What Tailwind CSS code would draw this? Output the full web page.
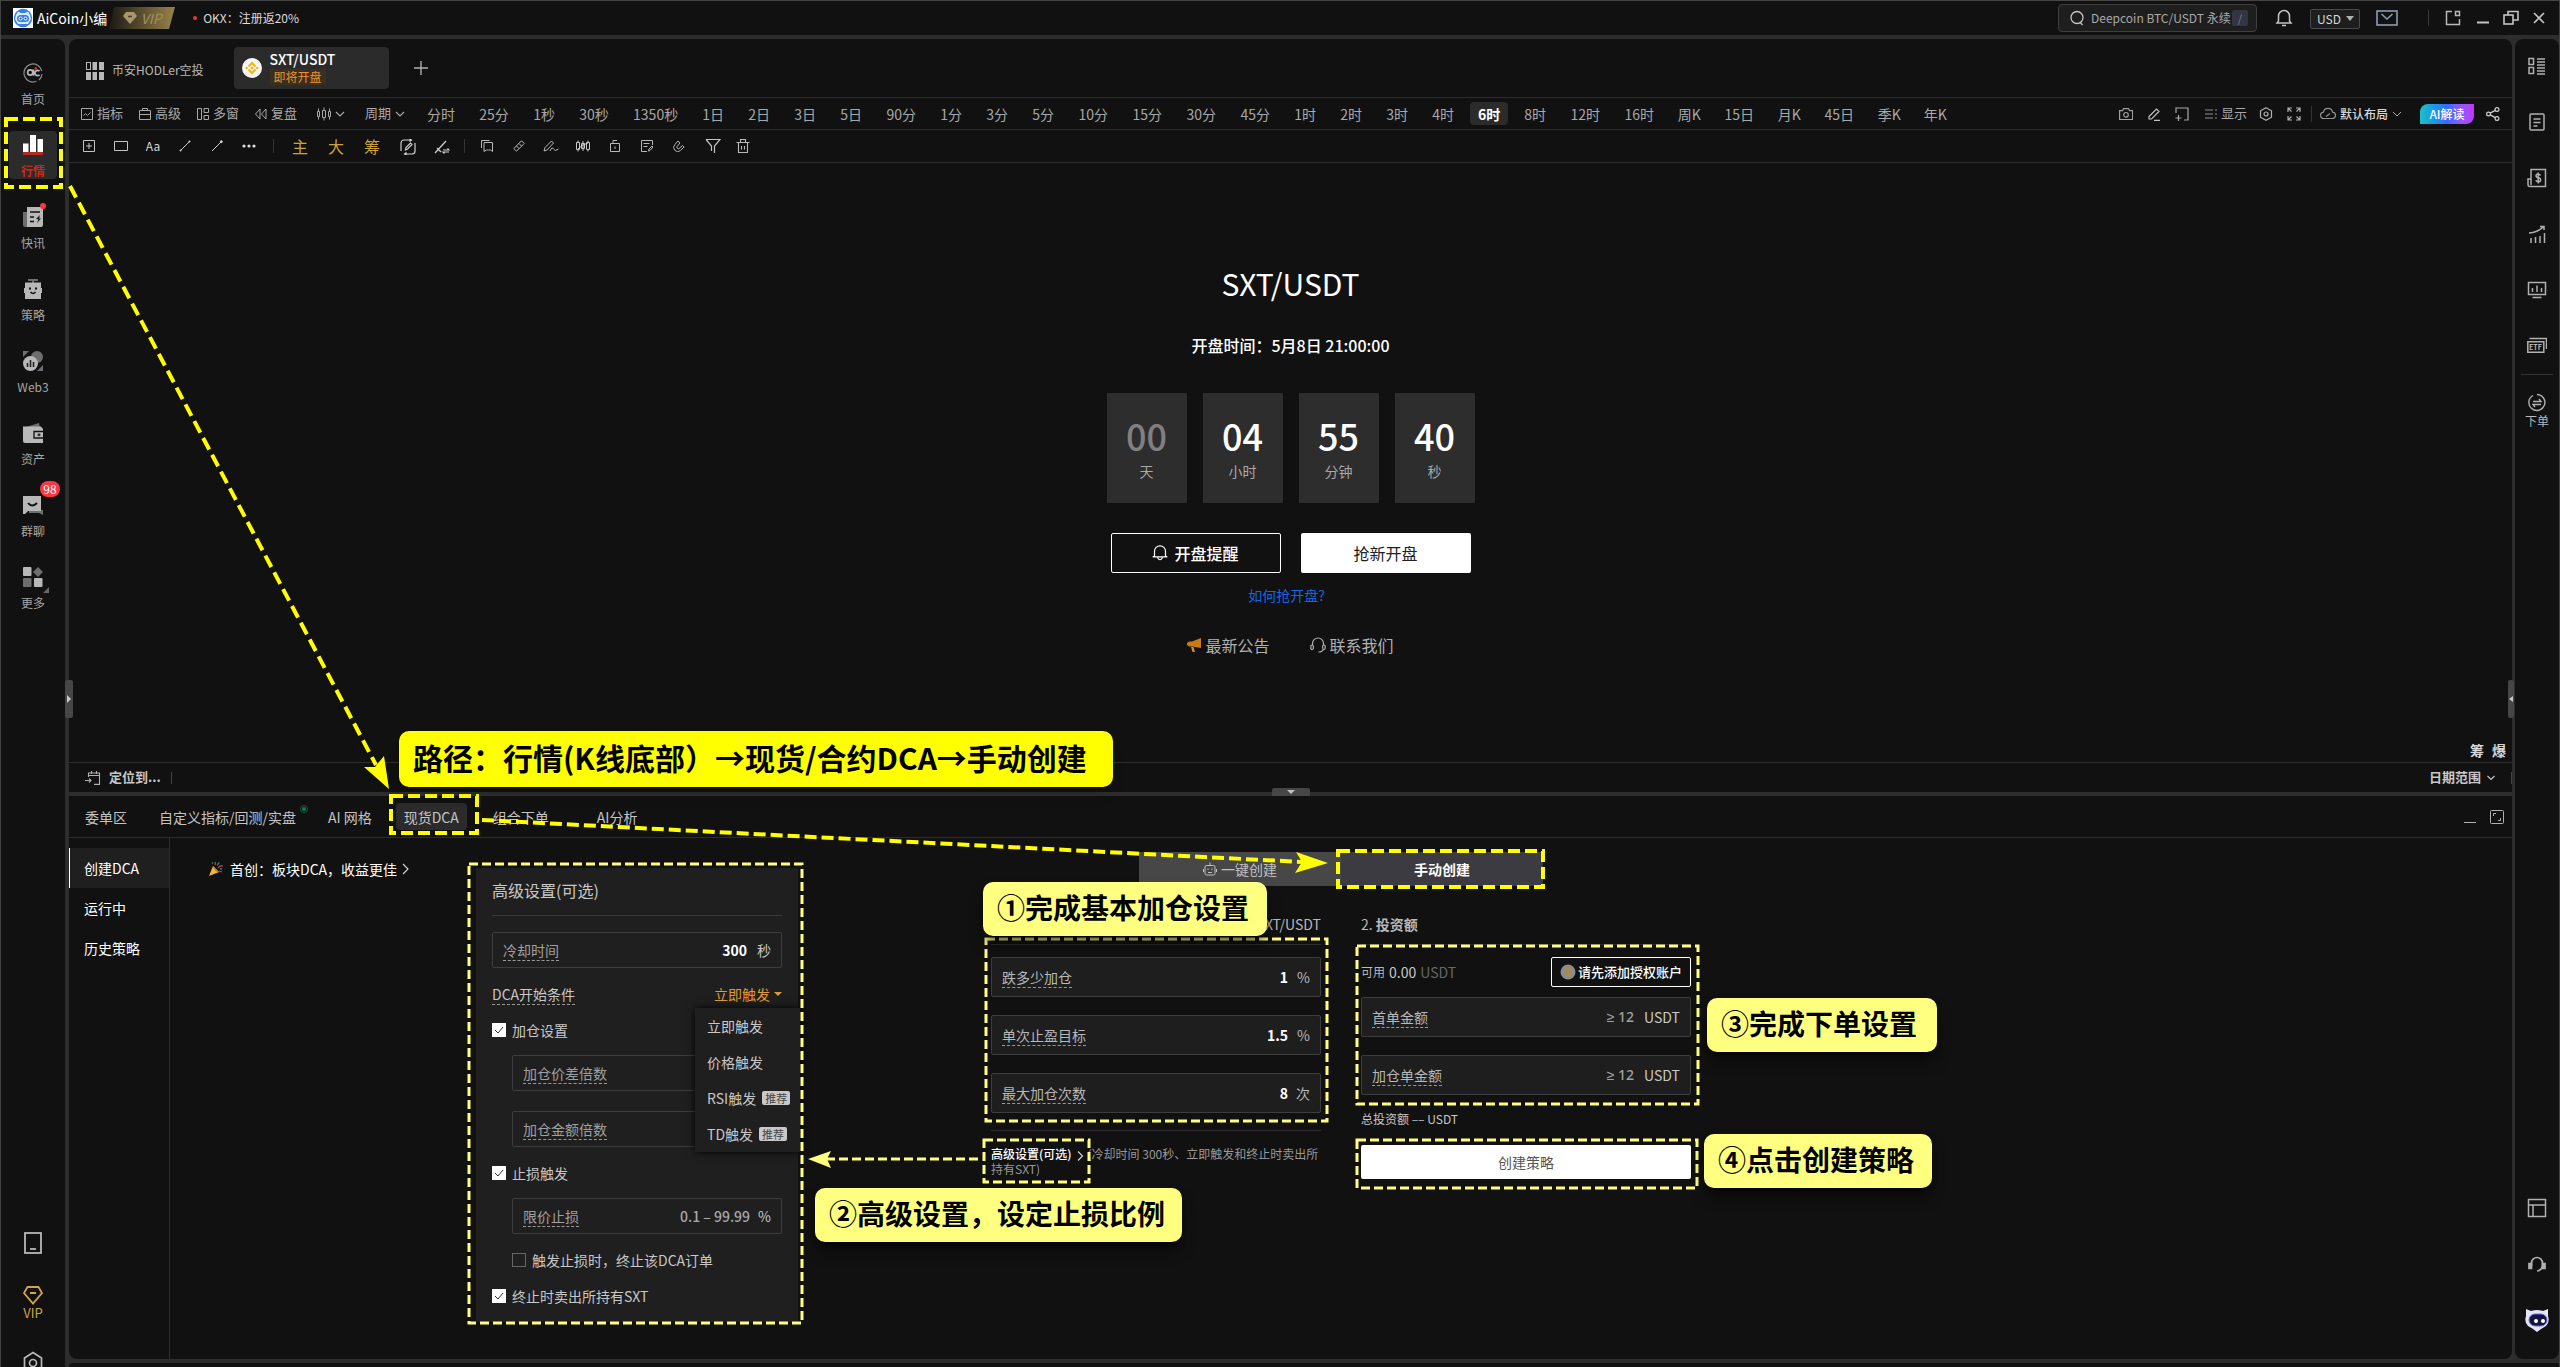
<!DOCTYPE html>
<html lang="zh-CN">
<head>
  <meta charset="UTF-8">
  <meta name="viewport" content="width=device-width, initial-scale=1.0">
  <title>AiCoin - SXT/USDT</title>
  <script src="https://cdn.jsdelivr.net/npm/@tailwindcss/browser@4"></script>
</head>
<body class="relative h-screen overflow-hidden flex flex-col bg-[#2d2d2d] border-t border-l border-r border-[#444] text-[#b8b8b8] text-sm font-['Noto_Sans_CJK_SC',sans-serif]">

  <!-- Title bar -->
  <header class="h-[34px] shrink-0 bg-[#111] flex items-center pl-3 pr-3.5">
    <svg class="w-5 h-5" viewBox="0 0 20 20"><rect width="20" height="20" fill="#fff"/><circle cx="10" cy="10" r="9.2" fill="#2f80f5"/><path d="M3 7l2-3.5L8 5h4l3-1.5L17 7l1 4-3 5H5l-3-5z" fill="#dcebff"/><rect x="4" y="7" width="12" height="7" rx="3.5" fill="#3d7fe0"/><circle cx="7.5" cy="10.5" r="2" fill="#dcebff"/><circle cx="12.5" cy="10.5" r="2" fill="#dcebff"/><circle cx="7.5" cy="10.5" r="1" fill="#1d4fb0"/><circle cx="12.5" cy="10.5" r="1" fill="#1d4fb0"/></svg>
    <span class="ml-1 text-white">AiCoin小编</span>
    <span class="relative ml-0.5 w-[66px] h-[22px] flex items-center justify-center gap-1">
      <svg class="absolute inset-0 w-full h-full" viewBox="0 0 66 22" preserveAspectRatio="none"><defs><linearGradient id="vip"><stop offset="0" stop-color="#1c1913"/><stop offset="1" stop-color="#97834a"/></linearGradient></defs><path d="M5 0H66L60 22H0z" fill="url(#vip)"/></svg>
      <svg class="relative w-3.5 h-3" viewBox="0 0 14 12"><path d="M3 0h8l3 4-7 8-7-8z" fill="#a8976a"/><path d="M5 4.5h4" stroke="#4a4026" stroke-width="1.6"/></svg>
      <span class="relative italic text-[#a08e5c] leading-5">VIP</span>
    </span>
    <span class="ml-[18px] w-1 h-1 rounded-full bg-[#f0353c]"></span>
    <a href="#" class="ml-1.5 text-xs text-[#dcdcdc]">OKX：注册返20%</a>

    <label class="ml-auto w-[199px] h-7 flex items-center bg-[#1e1e1e] border border-[#3f3f3f] rounded-sm pl-2.5 pr-2">
      <svg class="w-4 h-4 shrink-0" viewBox="0 0 16 16" fill="none" stroke="#c4c4c4" stroke-width="1.3"><circle cx="8" cy="7.5" r="6"/><path d="M11 12l2.5 3"/></svg>
      <input type="text" aria-label="搜索" value="Deepcoin BTC/USDT 永续" class="ml-1.5 w-0 grow min-w-0 text-xs text-[#a8a8a8] bg-transparent outline-none">
      <kbd class="w-4 h-4 rounded-xs bg-[#343542] text-[#7c7c7c] text-[11px] leading-4 text-center font-['Noto_Sans_CJK_SC',sans-serif]">/</kbd>
    </label>
    <button aria-label="通知" class="ml-[18px]"><svg class="w-[18px] h-[18px]" viewBox="0 0 18 18" fill="none" stroke="#c4c4c4" stroke-width="1.5"><path d="M9 1.5a5.5 5.5 0 0 1 5.5 5.5v5l1.5 2H2l1.5-2V7A5.5 5.5 0 0 1 9 1.5zM7 16.5h4"/></svg></button>
    <div class="relative ml-[17px] w-[50px] h-5">
      <select aria-label="货币" class="appearance-none w-full h-full pl-1.5 bg-[#1e1e1e] border border-[#4a4a4a] rounded-xs text-xs leading-4 text-[#d8d8d8]"><option>USD</option><option>CNY</option></select>
      <svg class="absolute right-1.5 top-2 w-2 h-1.5 pointer-events-none" viewBox="0 0 8 6"><path d="M0 0h8L4 5z" fill="#b0b0b0"/></svg>
    </div>
    <button aria-label="邮件" class="ml-4"><svg class="w-[22px] h-4" viewBox="0 0 22 16" fill="none" stroke="#8f9bb0" stroke-width="1.6"><rect x="1" y="1" width="20" height="14"/><path d="M5.5 4L11 9l5.500-5"/></svg></button>
    <span class="ml-[30px] w-px h-4 bg-[#3a3a3a]"></span>
    <button aria-label="侧窗" class="ml-4"><svg class="w-4 h-4" viewBox="0 0 16 16" fill="none" stroke="#b8b8b8" stroke-width="1.5"><path d="M7 1.5H1.5v13h13V9"/><rect x="10.5" y="1.5" width="4" height="4"/></svg></button>
    <button aria-label="最小化" class="ml-4"><svg class="w-3 h-4" viewBox="0 0 12 16"><path d="M0 12.5h12" stroke="#c4c4c4" stroke-width="2"/></svg></button>
    <button aria-label="还原" class="ml-3.5"><svg class="w-4 h-4" viewBox="0 0 16 16" fill="none" stroke="#c4c4c4" stroke-width="1.6"><rect x="1" y="5" width="9" height="9"/><path d="M5 5V1.500h10V10h-5"/></svg></button>
    <button aria-label="关闭" class="ml-3.5"><svg class="w-3 h-3" viewBox="0 0 12 12" stroke="#c4c4c4" stroke-width="1.6"><path d="M1 1l10 10M11 1L1 11"/></svg></button>
  </header>

  <div class="mt-1 flex-1 min-h-0 flex">

    <!-- Left navigation -->
    <nav class="w-16 shrink-0 bg-[#111] rounded-tr-lg flex flex-col items-center pt-5 text-xs leading-4 text-[#a6a6a6]">
      <div class="flex flex-col gap-6">
        <a href="#" class="w-12 h-12 pt-1 flex flex-col items-center gap-2">
          <svg class="w-5 h-5 shrink-0" viewBox="0 0 20 20" fill="none"><path d="M13.5 18.300A9 9 0 1 1 18.800 8M19 11a9 9 0 0 1-3 6" stroke="#8e8e8e" stroke-width="1.2"/><circle cx="7.2" cy="9.500" r="2.600" stroke="#b8b8b8" stroke-width="1.700"/><path d="M10.500 6.500v6.300M16.500 8.200a2.600 2.600 0 1 0 0 3.600" stroke="#b8b8b8" stroke-width="1.700"/><circle cx="12.800" cy="5.500" r="1.200" fill="#e0402a"/></svg>
          首页
        </a>
        <a href="#" class="w-12 h-12 pt-1 flex flex-col items-center gap-2 rounded-sm bg-[#2b2b2b] text-[#c92b1b] font-bold">
          <svg class="w-5 h-5 shrink-0" viewBox="0 0 20 20"><path d="M0 8.500h5.500V17H0zM7 0h6v17H7zM14.500 4H20v13h-5.500z" fill="#fff"/><path d="M0 17h20v3H0z" fill="#b32b1c"/></svg>
          行情
        </a>
        <a href="#" class="relative w-12 h-12 pt-1 flex flex-col items-center gap-2">
          <svg class="w-5 h-5 shrink-0" viewBox="0 0 20 20"><path d="M0 5h5v15H2a2 2 0 0 1-2-2z" fill="#6e6e6e"/><path d="M4 0h16v18a2 2 0 0 1-2 2H4z" fill="#b8b8b8"/><path d="M7 5h10M7 10h4M7 14.500h4" stroke="#111" stroke-width="1.700"/><path d="M17 8l-4 4h2.500l-1.500 4 4-4.500h-2z" fill="#111"/></svg>
          <span class="absolute right-[11px] top-0 w-1.5 h-1.5 rounded-full bg-[#fb3742]"></span>
          快讯
        </a>
        <a href="#" class="w-12 h-12 pt-1 flex flex-col items-center gap-2">
          <svg class="w-5 h-5 shrink-0" viewBox="0 0 20 20"><path d="M5 0h10v2h-4v2H9V2H5z" fill="#6e6e6e"/><path d="M2 3.500h16V9h1v5h-1v6H2v-6H1V9h1z" fill="#b8b8b8"/><path d="M6 8.500h2v2H6zM12 8.500h2v2h-2z" fill="#111"/><path d="M7.500 13q2.500 3 5 0" stroke="#111" stroke-width="1.500" fill="none"/></svg>
          策略
        </a>
        <a href="#" class="w-12 h-12 pt-1 flex flex-col items-center gap-2">
          <svg class="w-5 h-5 shrink-0" viewBox="0 0 20 20"><circle cx="14" cy="6" r="6" fill="#6e6e6e"/><path d="M0 0h6L0 6zM20 14v6h-6z" fill="#6e6e6e"/><circle cx="7.500" cy="12.500" r="7.500" fill="#b8b8b8"/><path d="M4.500 12v4M7.500 9v7M10.500 11v5" stroke="#222" stroke-width="1.600"/></svg>
          Web3
        </a>
        <a href="#" class="w-12 h-12 pt-1 flex flex-col items-center gap-2">
          <svg class="w-5 h-5 shrink-0" viewBox="0 0 20 20"><path d="M3 4l13-4 1 5H3z" fill="#6e6e6e"/><path d="M0 3.500h18L20 6v14H2a2 2 0 0 1-2-2z" fill="#b8b8b8"/><path d="M20 8.500h-9v6.500h9" fill="#b8b8b8" stroke="#111" stroke-width="1.300"/><circle cx="16" cy="11.800" r="1.500" fill="#333"/></svg>
          资产
        </a>
        <a href="#" class="relative w-12 h-12 pt-1 flex flex-col items-center gap-2">
          <svg class="w-5 h-5 shrink-0" viewBox="0 0 20 20"><path d="M6 15h14v5l-4-2H6z" fill="#6e6e6e"/><path d="M0 1h18v15H5l-3 3H0z" fill="#b8b8b8"/><path d="M5 8q4 5 9 0" stroke="#111" stroke-width="2" fill="none"/></svg>
          <span class="absolute left-[31px] -top-2.5 w-5 h-4 rounded-full bg-[#fb3742] text-white text-center">98</span>
          群聊
        </a>
        <a href="#" class="relative w-12 h-12 pt-1 flex flex-col items-center gap-2">
          <svg class="w-5 h-5 shrink-0" viewBox="0 0 20 20"><rect y="0" width="8.500" height="9" rx="1" fill="#b8b8b8"/><path d="M15 0l5 5-5 5-5-5z" fill="#6e6e6e"/><rect y="11" width="8.500" height="9" rx="1" fill="#6e6e6e"/><rect x="11" y="11" width="8.500" height="9" rx="1" fill="#b8b8b8"/></svg>
          <svg class="absolute right-2 top-6 w-1.5 h-1.5" viewBox="0 0 6 6"><path d="M6 0v6H0z" fill="#666"/></svg>
          更多
        </a>
      </div>
      <div class="mt-auto -mb-2 flex flex-col items-center">
        <button aria-label="手机版"><svg class="w-5 h-6" viewBox="0 0 20 24" fill="none" stroke="#b8b8b8" stroke-width="1.800"><rect x="2" y="2" width="16" height="20"/><path d="M7 18h6"/></svg></button>
        <a href="#" class="mt-[30px] flex flex-col items-center text-[13px] leading-4 text-[#cfa548]">
          <svg class="w-5 h-5" viewBox="0 0 20 20" fill="none" stroke="#cfa548" stroke-width="1.800"><path d="M4.500 2h11L19 8l-9 10.500L1 8zM7 8h6"/></svg>
          VIP
        </a>
        <button aria-label="设置" class="mt-[30px]"><svg class="w-5 h-6" viewBox="0 0 20 24" fill="none" stroke="#b8b8b8" stroke-width="1.700"><path d="M10 1.500L18.500 7v10L10 22.500 1.500 17V7z"/><circle cx="10" cy="12" r="3.500"/></svg></button>
      </div>
    </nav>

    <div class="ml-1 flex-1 min-w-0 flex flex-col">
      <div class="flex-1 min-h-0 flex">

        <!-- Workspace -->
        <main class="relative flex-1 min-w-0 flex flex-col">
          <section class="flex-1 min-h-0 bg-[#111] rounded-t-lg flex flex-col">

            <div class="h-[59px] shrink-0 border-b border-[#2d2d2d] flex items-center pl-[17px]">
              <svg class="mt-1.5 w-[18px] h-[18px]" viewBox="0 0 18 18" fill="#b8b8b8"><rect x=".5" y=".5" width="4" height="7" fill="none" stroke="#b8b8b8"/><path d="M6.500 0H11v8H6.500zM13 0h5v8h-5zM0 10h5v8H0zM6.500 10H11v8H6.500zM13 10h5v8h-5z"/></svg>
              <a href="#" class="mt-1 ml-2 text-xs">币安HODLer空投</a>
              <div class="ml-[30px] w-[155px] h-[42px] rounded-sm bg-[#2b2b2b] flex items-center pl-2 gap-2">
                <svg class="w-5 h-5" viewBox="0 0 20 20"><circle cx="10" cy="10" r="10" fill="#f5f5f5"/><path d="M6.500 8.500L10 5l3.500 3.500M6.500 11.500L10 15l3.500-3.500" fill="none" stroke="#f6b40e" stroke-width="2"/><path d="M10 8.300l1.700 1.700-1.700 1.700L8.300 10zM4.800 8.500L6.300 10l-1.500 1.500L3.300 10zM15.200 8.500l1.500 1.500-1.500 1.500-1.500-1.500z" fill="#f6b40e"/></svg>
                <div class="flex flex-col items-start">
                  <span class="text-sm leading-4 font-medium text-white">SXT/USDT</span>
                  <span class="mt-0.5 px-1 text-xs leading-4 text-[#f0932b] bg-[#3b2f22]">即将开盘</span>
                </div>
              </div>
              <button aria-label="新标签" class="ml-6"><svg class="w-4 h-4" viewBox="0 0 16 16" stroke="#b0b0b0" stroke-width="1.400"><path d="M8 1v14M1 8h14"/></svg></button>
            </div>

            <!-- Periods -->
            <div class="h-8 shrink-0 border-b border-[#2d2d2d] flex items-center pl-3 pr-3 text-[13px] text-[#a8a8a8] whitespace-nowrap">
              <button class="flex items-center gap-1 mr-4"><svg class="w-3 h-3" viewBox="0 0 12 12" fill="none" stroke="#a8a8a8"><path d="M.5.5h11v11H.5zM2.500 7.500l2-2 2 2 3-3"/></svg>指标</button>
              <button class="flex items-center gap-1 mr-4"><svg class="w-3 h-3" viewBox="0 0 12 12" fill="none" stroke="#a8a8a8"><path d="M.5 2.500h11v9H.5zM.5 6.500h11M3.500 2.500v-2h5v2"/></svg>高级</button>
              <button class="flex items-center gap-1 mr-4"><svg class="w-3 h-3" viewBox="0 0 12 12" fill="none" stroke="#a8a8a8"><path d="M.5.5h4v11h-4zM7 .5h4.500v4H7zM7 7.500h4.500v4H7z"/></svg>多窗</button>
              <button class="flex items-center gap-1 mr-5"><svg class="w-3 h-3" viewBox="0 0 12 12" fill="none" stroke="#a8a8a8"><path d="M5 1v10L.5 6zM11 1v10L6.500 6z"/></svg>复盘</button>
              <button aria-label="K线类型" class="flex items-center gap-1 mr-5"><svg class="w-3.5 h-3.5" viewBox="0 0 14 14" fill="none" stroke="#a8a8a8"><path d="M.5 4.500h2v5h-2zM5.500 3.500h3v7h-3zM11.500 4.500h2v5h-2zM1.500 1.500v3M1.500 9.500v3M7 .5v3M7 10.500v3M12.500 1.500v3M12.500 9.500v3"/></svg><svg class="w-2.5 h-2.5" viewBox="0 0 10 10" fill="none" stroke="#a8a8a8" stroke-width="1.200"><path d="M1 3l4 4 4-4"/></svg></button>
              <button class="flex items-center gap-1 mr-3.5">周期<svg class="w-2.5 h-2.5" viewBox="0 0 10 10" fill="none" stroke="#a8a8a8" stroke-width="1.200"><path d="M1 3l4 4 4-4"/></svg></button>
              <div class="flex gap-2 text-sm">
                <button class="px-2">分时</button>
                <button class="w-[46px]">25分</button>
                <button class="w-[38px]">1秒</button>
                <button class="w-[46px]">30秒</button>
                <button class="px-2">1350秒</button>
                <button class="w-[38px]">1日</button>
                <button class="w-[38px]">2日</button>
                <button class="w-[38px]">3日</button>
                <button class="w-[38px]">5日</button>
                <button class="w-[46px]">90分</button>
                <button class="w-[38px]">1分</button>
                <button class="w-[38px]">3分</button>
                <button class="w-[38px]">5分</button>
                <button class="w-[46px]">10分</button>
                <button class="w-[46px]">15分</button>
                <button class="w-[46px]">30分</button>
                <button class="w-[46px]">45分</button>
                <button class="w-[38px]">1时</button>
                <button class="w-[38px]">2时</button>
                <button class="w-[38px]">3时</button>
                <button class="w-[38px]">4时</button>
                <button class="w-[38px] h-[23px] rounded-sm bg-[#2b2b2b] text-white font-bold">6时</button>
                <button class="w-[38px]">8时</button>
                <button class="w-[46px]">12时</button>
                <button class="w-[46px]">16时</button>
                <button class="w-[38px]">周K</button>
                <button class="w-[46px]">15日</button>
                <button class="w-[38px]">月K</button>
                <button class="w-[46px]">45日</button>
                <button class="w-[38px]">季K</button>
                <button class="w-[38px]">年K</button>
              </div>
              <div class="ml-auto flex items-center gap-3.5">
                <button aria-label="截图"><svg class="w-3.5 h-3" viewBox="0 0 14 12" fill="none" stroke="#a0a0a0" stroke-width="1.200"><path d="M.6 2.600h3l1-2h5l1 2h3v9H.6z"/><circle cx="7" cy="6.800" r="2.300"/></svg></button>
                <button aria-label="画笔"><svg class="w-3.5 h-3.5" viewBox="0 0 14 14" fill="none" stroke="#c0c0c0" stroke-width="1.200"><path d="M2 9.500L9.500 2 12 4.500 4.500 12H2zM7 13.300h6"/></svg></button>
                <button aria-label="添加窗口"><svg class="w-3.5 h-3.5" viewBox="0 0 14 14" fill="none" stroke="#a8a8a8" stroke-width="1.200"><path d="M1 6V1h12v12H9M3.500 8v6M.5 11h6"/></svg></button>
                <button class="ml-0.5 flex items-center gap-1"><svg class="w-3 h-3" viewBox="0 0 12 12" stroke="#8e8e8e" stroke-width="1.200"><path d="M0 2h8M0 6h8M0 10h8M10 2h2M10 6h2M10 10h2"/></svg>显示</button>
                <button aria-label="图表设置" class="-ml-0.5"><svg class="w-3.5 h-3.5" viewBox="0 0 14 14" fill="none" stroke="#b0b0b0" stroke-width="1.200"><path d="M7 .8l5.500 3v6.400L7 13.200l-5.500-3V3.800z"/><circle cx="7" cy="7" r="2"/></svg></button>
                <button aria-label="全屏"><svg class="w-3.5 h-3.5" viewBox="0 0 14 14" fill="none" stroke="#b0b0b0" stroke-width="1.200"><path d="M1 5V1h4M1 1l3.500 3.500M9 1h4v4M13 1L9.500 4.500M1 9v4h4M1 13l3.500-3.500M13 9v4H9M13 13L9.500 9.500"/></svg></button>
                <span class="-ml-1 -mr-1.5 w-px h-4 bg-[#333]"></span>
                <button class="flex items-center gap-1 text-xs font-medium text-[#d8d8d8]"><svg class="w-4 h-3.5" viewBox="0 0 16 14" fill="none" stroke="#909090" stroke-width="1.200"><path d="M4 11.500a3.200 3.200 0 0 1-.5-6.400 4.600 4.600 0 0 1 9 0 3.200 3.200 0 0 1-.5 6.400zM6 9.500l4-3"/></svg>默认布局<svg class="w-2.5 h-2.5" viewBox="0 0 10 10" fill="none" stroke="#a8a8a8"><path d="M1 3l4 4 4-4"/></svg></button>
                <button class="ml-1 w-[54px] h-5 rounded-tl-lg rounded-br-lg bg-linear-to-r from-[#1fc0c8] via-[#2f6bff] to-[#c531ff] text-xs font-medium text-white">AI解读</button>
                <button aria-label="分享" class="-ml-0.5"><svg class="w-3.5 h-3.5" viewBox="0 0 14 14" fill="none" stroke="#d0d0d0" stroke-width="1.200"><circle cx="2.500" cy="7" r="1.900"/><circle cx="11" cy="2.500" r="1.900"/><circle cx="11" cy="11.500" r="1.900"/><path d="M4.200 6.100l5-2.700M4.200 7.900l5 2.700"/></svg></button>
              </div>
            </div>

            <!-- Drawing tools -->
            <div class="h-[33px] shrink-0 border-b border-[#2d2d2d] flex items-center pl-1">
              <button aria-label="新增" class="w-8 flex justify-center"><svg class="w-3 h-3" viewBox="0 0 12 12" fill="none" stroke="#c4c4c4"><path d="M.5.5h11v11H.5zM6 3v6M3 6h6"/></svg></button>
              <button aria-label="矩形" class="w-8 flex justify-center"><svg class="w-3.5 h-2.5" viewBox="0 0 14 10" fill="none" stroke="#c4c4c4"><path d="M.5.5h13v9H.5z"/></svg></button>
              <button class="w-8 text-xs text-[#d8d8d8]">Aa</button>
              <button aria-label="线段" class="w-8 flex justify-center"><svg class="w-3 h-3" viewBox="0 0 12 12" stroke="#d0d0d0" fill="#d0d0d0"><path d="M1 11L11 1"/><circle cx="1.500" cy="10.500" r=".6"/><circle cx="10.500" cy="1.500" r=".6"/></svg></button>
              <button aria-label="射线" class="w-8 flex justify-center"><svg class="w-3 h-3" viewBox="0 0 12 12" stroke="#d0d0d0" fill="#d0d0d0"><path d="M1 11l9-9"/><circle cx="10.300" cy="1.700" r="1"/></svg></button>
              <button aria-label="更多工具" class="w-8 flex justify-center"><svg class="w-3.5 h-1" viewBox="0 0 14 4" fill="#e0e0e0"><circle cx="2" cy="2" r="1.600"/><circle cx="7" cy="2" r="1.600"/><circle cx="12" cy="2" r="1.600"/></svg></button>
              <span class="mx-2 w-px h-3.5 bg-[#333]"></span>
              <button class="w-9 text-base leading-8 text-[#cda434]">主</button>
              <button class="w-9 text-base leading-8 text-[#cda434]">大</button>
              <button class="w-9 text-base leading-8 text-[#cda434]">筹</button>
              <button aria-label="旋转编辑" class="w-9 pt-0.5 flex justify-center"><svg class="w-4 h-4" viewBox="0 0 16 16" fill="none" stroke="#d0d0d0" stroke-width="1.200"><path d="M1 12V4a3 3 0 0 1 3-3h7M9.500 0l2 1-2 1.500M15 4v8a3 3 0 0 1-3 3H5M6.500 13.500l-2 1.500 2 1M5.500 11l.5-2.500 4.500-4.500 1.500 1.500L7.500 10z"/></svg></button>
              <button aria-label="隐藏画线" class="w-8 pt-0.5 flex justify-center"><svg class="w-4 h-4" viewBox="0 0 16 16" fill="none" stroke="#d0d0d0" stroke-width="1.200"><path d="M1 14L12 2M3 9l4 4M9 11h6l-1.500-1.500M15 13H9l1.500 1.500"/></svg></button>
              <span class="mx-1.5 w-px h-3.5 bg-[#333]"></span>
              <button aria-label="收藏" class="w-8 flex justify-center"><svg class="w-3 h-3" viewBox="0 0 12 12" fill="none" stroke="#b8b8b8"><path d="M.5 8V.5h8M3 2.500h8.500v9L9.500 10l-2 0-2 0L3 11.500z"/></svg></button>
              <button aria-label="测量" class="w-8 flex justify-center"><svg class="w-3 h-3" viewBox="0 0 12 12" fill="none" stroke="#b8b8b8"><path d="M.8 8.500L8.500.8l2.700 2.700-7.700 7.700zM3.500 6l2.500 2.500M6 3.500L8.500 6"/></svg></button>
              <button aria-label="自由画笔" class="w-8 flex justify-center"><svg class="w-4 h-3" viewBox="0 0 16 12" fill="none" stroke="#b8b8b8"><path d="M1 11l1-3.500L8.500 1l2 2L4 10zM7 11q2-5 3.500-2t5 0"/></svg></button>
              <button aria-label="K线形态" class="w-8 flex justify-center"><svg class="w-3.5 h-3" viewBox="0 0 14 12" fill="none" stroke="#c8c8c8"><path d="M.5 2.500h3v7h-3zM10.500 2.500h3v7h-3zM5.500 3.500h3v5h-3zM2 .5v2M2 9.500v2M12 .5v2M12 9.500v2M2 9l5-4 5-2M7 1v10"/></svg></button>
              <button aria-label="锁定" class="w-8 flex justify-center"><svg class="w-3 h-3" viewBox="0 0 12 12" fill="none" stroke="#b8b8b8"><path d="M1.500 3.500h9v8h-9zM4 3.500v-3h4M6 6.500v2.500"/></svg></button>
              <button aria-label="备注" class="w-8 flex justify-center"><svg class="w-3 h-3" viewBox="0 0 12 12" fill="none" stroke="#b8b8b8"><path d="M11.500 5V.5H.5v11H6M2.500 3.500h6M2.500 6.500h4M7.500 11l.5-2 3-3 1 1-3 3.500z"/></svg></button>
              <button aria-label="磁吸" class="w-8 flex justify-center"><svg class="w-3 h-3" viewBox="0 0 12 12" fill="none" stroke="#b8b8b8"><path d="M5 1L2 4.500a4 4 0 0 0 5.500 6L11 7 9.500 5.500 6.200 8.500a1.500 1.500 0 0 1-2-2.200L7 3z"/></svg></button>
              <button aria-label="筛选" class="w-8 flex justify-center pl-1"><svg class="w-4 h-4" viewBox="0 0 16 16" fill="none" stroke="#c4c4c4" stroke-width="1.200"><path d="M1 1.500h14L9.500 8v7M1 1.500L6.500 8v5"/></svg></button>
              <button aria-label="删除" class="w-8 flex justify-center"><svg class="w-3.5 h-3.5" viewBox="0 0 14 14" fill="none" stroke="#b8b8b8" stroke-width="1.100"><path d="M.5 3.500h13M4.500 3.500v-3h5v3M2.500 3.500v10h9v-10M5.500 7v3.500M8.500 7v3.500"/></svg></button>
            </div>

            <!-- Countdown -->
            <div class="relative flex-1 min-h-0 pb-1.5 flex flex-col items-center justify-center">
              <h1 class="text-[30px] leading-10 text-white">SXT/USDT</h1>
              <p class="mt-[30px] text-base leading-6 font-medium text-white">开盘时间：5月8日 21:00:00</p>
              <div class="mt-9 flex gap-4 text-center">
                <div class="w-20 h-[110px] pt-5 bg-[#2d2d2d]"><div class="text-4xl leading-11 font-medium text-[#808080]">00</div><div class="mt-1 text-sm text-[#a8a8a8]">天</div></div>
                <div class="w-20 h-[110px] pt-5 bg-[#2d2d2d]"><div class="text-4xl leading-11 font-medium text-white">04</div><div class="mt-1 text-sm text-[#a8a8a8]">小时</div></div>
                <div class="w-20 h-[110px] pt-5 bg-[#2d2d2d]"><div class="text-4xl leading-11 font-medium text-white">55</div><div class="mt-1 text-sm text-[#a8a8a8]">分钟</div></div>
                <div class="w-20 h-[110px] pt-5 bg-[#2d2d2d]"><div class="text-4xl leading-11 font-medium text-white">40</div><div class="mt-1 text-sm text-[#a8a8a8]">秒</div></div>
              </div>
              <div class="mt-[30px] flex gap-5">
                <button class="w-[170px] h-10 rounded-xs border border-white flex items-center justify-center gap-1.5 text-base font-medium text-white"><svg class="w-4 h-4" viewBox="0 0 16 16" fill="none" stroke="#fff" stroke-width="1.200"><path d="M8 .8a5.500 5.500 0 0 1 5.500 5.500V11l1.700.8H.8L2.500 11V6.300A5.500 5.500 0 0 1 8 .8zM5.500 12.500q2.500 4.500 5 0"/></svg>开盘提醒</button>
                <button class="w-[170px] h-10 rounded-xs bg-white text-base text-[#222]">抢新开盘</button>
              </div>
              <a href="#" class="mt-3 -ml-2 text-sm text-[#1565e6]">如何抢开盘?</a>
              <div class="mt-7 flex gap-10 text-base text-[#b0b0b0]">
                <a href="#" class="flex items-center gap-1"><svg class="w-3.5 h-3.5" viewBox="0 0 14 14"><path d="M14 0v10L5 8.500H2L0 7V5l2-1.500h3z" fill="#c97a14"/><path d="M4 9h2.500l1.500 5H5.500z" fill="#d98a1c"/></svg>最新公告</a>
                <a href="#" class="flex items-center gap-1"><svg class="w-4 h-4" viewBox="0 0 16 16" fill="none" stroke="#b0b0b0" stroke-width="1.200"><path d="M2.500 8V6.500a5.500 5.500 0 0 1 11 0V8M13.500 12q-1 3-5 3"/><rect x=".8" y="8" width="2.500" height="4.500" rx="1.200"/><rect x="12.700" y="8" width="2.500" height="4.500" rx="1.200"/></svg>联系我们</a>
              </div>
              <div class="absolute right-1.5 bottom-1 flex gap-2 text-sm leading-4 font-bold text-[#d8d8d8]"><button>筹</button><button>爆</button></div>
            </div>

            <div class="h-[30px] shrink-0 border-t border-[#2d2d2d] flex items-center pl-4 text-[13px] font-bold text-[#c8c8c8]">
              <button class="flex items-center gap-2"><svg class="w-4 h-3.5" viewBox="0 0 16 14" fill="none" stroke="#b0b0b0" stroke-width="1.100"><path d="M3.500 6V2h11v11.400H9M3.500 4.500h11M6.500 0v3M11.500 0v3M0 9.500h6M4 7.500l2 2-2 2"/></svg>定位到...</button>
              <span class="ml-2.5 w-px h-3 bg-[#444]"></span>
              <button class="ml-auto flex items-center gap-1.5">日期范围<svg class="w-2 h-2" viewBox="0 0 8 8" fill="none" stroke="#c4c4c4" stroke-width="1.200"><path d="M.5 2L4 5.500 7.500 2"/></svg></button>
              <span class="ml-4 w-px h-3 bg-[#444]"></span>
            </div>
          </section>

          <!-- Strategy panel -->
          <section class="relative mt-1 h-[563px] shrink-0 bg-[#111] rounded-b-lg flex flex-col">
            <div class="h-[42px] shrink-0 border-b border-[#2d2d2d] flex items-center gap-8 pl-4 pr-2 text-[#c4c4c4]">
              <button>委单区</button>
              <button class="relative">自定义指标/回测/实盘<svg class="absolute -right-3 -top-0.5 w-2 h-2" viewBox="0 0 8 8"><circle cx="4" cy="4" r="3.500" fill="none" stroke="#0c5a45"/><circle cx="4" cy="4" r="2" fill="#0f7a5c"/></svg></button>
              <button>AI 网格</button>
              <button class="-mx-2 px-2 h-[27px] rounded-sm bg-[#2b2b2b]">现货DCA</button>
              <button class="ml-0.5">组合下单</button>
              <button class="ml-4">AI分析</button>
              <div class="ml-auto flex items-center gap-3.5">
                <button aria-label="收起"><svg class="w-3 h-3.5" viewBox="0 0 12 14"><path d="M0 12.500h12" stroke="#b0b0b0"/></svg></button>
                <button aria-label="展开"><svg class="w-3.5 h-3.5" viewBox="0 0 14 14" fill="none" stroke="#b0b0b0"><rect x=".5" y=".5" width="13" height="13" rx="1"/><path d="M3.500 6V3.500H6M8 10.500h2.500V8"/></svg></button>
              </div>
            </div>

            <div class="relative flex-1 min-h-0 flex">
              <div class="w-[101px] shrink-0 border-r border-[#2d2d2d] pt-2.5 flex flex-col text-white">
                <button class="h-10 pl-3.5 text-left bg-[#1f1f1f] border-l border-white">创建DCA</button>
                <button class="h-10 pl-[15px] text-left">运行中</button>
                <button class="h-10 pl-[15px] text-left">历史策略</button>
              </div>

              <div class="flex-1 grid grid-cols-[1fr_700px_1fr]">
                <div class="pl-[38px] pt-[21px]">
                  <a href="#" class="flex items-center text-white leading-5">
                    <svg class="w-4 h-4" viewBox="0 0 16 16"><path d="M1 15L5 5l6 6z" fill="#f2b632"/><path d="M5 5l6 6-1.500.7L4.500 6.500z" fill="#c98216"/><path d="M7 4q1-2 0-3M10 7q2-3 5-2M11 10l3 1" stroke="#c8402f" stroke-width="1.300" fill="none"/><path d="M9.500 4.500q0-2 2-3" stroke="#2d86c8" stroke-width="1.300" fill="none"/><circle cx="13" cy="8" r=".9" fill="#2d86c8"/><circle cx="4.500" cy="2" r=".8" fill="#2aa06a"/></svg>
                    <span class="ml-1.5">首创：板块DCA，收益更佳</span>
                    <svg class="ml-1 w-2 h-3" viewBox="0 0 8 12" fill="none" stroke="#d0d0d0" stroke-width="1.200"><path d="M2 1l5 5-5 5"/></svg>
                  </a>
                </div>

                <div class="pt-3.5">
                  <div class="mx-auto w-[404px] h-[34px] grid grid-cols-2">
                    <button class="bg-[#474747] flex items-center justify-center gap-1 text-[#c0c0c0]"><svg class="w-3.5 h-3.5" viewBox="0 0 14 14" fill="none" stroke="#c0c0c0"><rect x="2" y="3.500" width="10" height="9.500" rx="1.500"/><path d="M7 .5v3M.5 7v3M13.500 7v3M5 6.500v1.500M9 6.500v1.500M5 10.500h4"/></svg>一键创建</button>
                    <button class="bg-[#3b3b41] font-bold text-white">手动创建</button>
                  </div>

                  <div class="mt-7 grid grid-cols-2 gap-10">
                    <div>
                      <div class="pb-2.5 border-b border-[#2d2d2d] leading-5 text-right">SXT/USDT</div>
                      <div class="mt-3 flex flex-col gap-[18px]">
                        <div class="h-10 px-2.5 flex items-center bg-[#1e1e1e] border border-[#3d3d3d] rounded-xs"><label for="drop" class="leading-5 border-b border-dashed border-[#999]">跌多少加仓</label><input id="drop" type="text" value="1" class="w-0 grow text-right font-bold text-white outline-none"><span class="ml-2 w-3.5 text-right">%</span></div>
                        <div class="h-10 px-2.5 flex items-center bg-[#1e1e1e] border border-[#3d3d3d] rounded-xs"><label for="profit" class="leading-5 border-b border-dashed border-[#999]">单次止盈目标</label><input id="profit" type="text" value="1.5" class="w-0 grow text-right font-bold text-white outline-none"><span class="ml-2 w-3.5 text-right">%</span></div>
                        <div class="h-10 px-2.5 flex items-center bg-[#1e1e1e] border border-[#3d3d3d] rounded-xs"><label for="times" class="leading-5 border-b border-dashed border-[#999]">最大加仓次数</label><input id="times" type="text" value="8" class="w-0 grow text-right font-bold text-white outline-none"><span class="ml-2 w-3.5 text-right">次</span></div>
                      </div>
                      <p class="mt-[17px] pt-[15px] border-t border-[#2d2d2d] text-xs leading-[15px] text-[#999]"><a href="#" class="font-medium text-white">高级设置(可选)<svg class="inline mx-1 w-2 h-2.5" viewBox="0 0 8 10" fill="none" stroke="#d0d0d0" stroke-width="1.200"><path d="M2 .5L6.500 5 2 9.500"/></svg></a>(冷却时间 300秒、立即触发和终止时卖出所持有SXT)</p>
                    </div>

                    <div>
                      <div class="pb-2.5 border-b border-[#2d2d2d] leading-5">2. <b>投资额</b></div>
                      <div class="mt-3 h-[30px] flex items-center">
                        <span class="text-xs">可用</span><span class="ml-1 text-[#c8c8c8]">0.00</span><span class="ml-1 text-[#666]">USDT</span>
                        <button class="ml-auto h-full px-2 flex items-center gap-0.5 border border-white rounded-xs text-[13px] font-medium text-white"><svg class="w-4 h-4" viewBox="0 0 16 16"><circle cx="8" cy="8" r="7.500" fill="#8c8c8c"/><path d="M5 7l3-3 3 3M5 9l3 3 3-3" fill="none" stroke="#c08b1d" stroke-width="1.500"/><path d="M8 6.700L9.300 8 8 9.300 6.700 8z" fill="#c08b1d"/></svg>请先添加授权账户</button>
                      </div>
                      <div class="mt-2.5 flex flex-col gap-[18px]">
                        <div class="h-10 px-2.5 flex items-center bg-[#1e1e1e] border border-[#3d3d3d] rounded-xs"><label for="first" class="leading-5 border-b border-dashed border-[#999]">首单金额</label><input id="first" type="text" placeholder="≥ 12" class="w-0 grow text-right font-medium text-white placeholder:text-[#a0a0a0] font-['Noto_Sans',sans-serif] outline-none"><span class="ml-2.5 text-[#c8c8c8]">USDT</span></div>
                        <div class="h-10 px-2.5 flex items-center bg-[#1e1e1e] border border-[#3d3d3d] rounded-xs"><label for="extra" class="leading-5 border-b border-dashed border-[#999]">加仓单金额</label><input id="extra" type="text" placeholder="≥ 12" class="w-0 grow text-right font-medium text-white placeholder:text-[#a0a0a0] font-['Noto_Sans',sans-serif] outline-none"><span class="ml-2.5 text-[#c8c8c8]">USDT</span></div>
                      </div>
                      <p class="mt-3.5 text-xs leading-5 text-[#c8c8c8]">总投资额 –– USDT</p>
                      <button class="mt-4 w-full h-[34px] rounded-xs bg-white text-[#555]">创建策略</button>
                    </div>
                  </div>
                </div>
              </div>

              <!-- Advanced settings popup -->
              <form class="absolute left-[407px] top-[30px] w-[322px] px-4 pt-3 pb-4 bg-[#1f1f1f] leading-5 text-[#c8c8c8]">
                <h2 class="pb-[15px] border-b border-[#3a3a3a] text-base leading-5">高级设置(可选)</h2>
                <div class="mt-4 h-9 px-2.5 flex items-center border border-[#3d3d3d] rounded-xs"><label for="cool" class="border-b border-dashed border-[#999] text-[#a0a0a0]">冷却时间</label><input id="cool" type="text" value="300" class="w-0 grow text-right font-bold text-white outline-none"><span class="ml-2.5">秒</span></div>
                <div class="mt-4 h-5 flex items-center justify-between">
                  <span class="border-b border-dashed border-[#999]">DCA开始条件</span>
                  <button type="button" aria-expanded="true" class="flex items-center gap-1 text-[#e09b33]">立即触发<svg class="w-2 h-2" viewBox="0 0 8 8"><path d="M0 2h8L4 6z" fill="#e09b33"/></svg></button>
                </div>
                <label class="mt-4 flex items-center gap-1.5"><span class="relative w-3.5 h-3.5"><input type="checkbox" checked class="peer block appearance-none w-3.5 h-3.5 border border-[#666] checked:bg-white checked:border-white"><svg class="hidden peer-checked:block absolute inset-0 pointer-events-none" viewBox="0 0 14 14" fill="none" stroke="#333"><path d="M3 7l3 3 5-6"/></svg></span>加仓设置</label>
                <div class="mt-[15px] ml-5 h-9 px-2.5 flex items-center border border-[#3d3d3d] rounded-xs"><label for="gap" class="border-b border-dashed border-[#999] text-[#a0a0a0]">加仓价差倍数</label><input id="gap" type="text" class="w-0 grow text-right outline-none"></div>
                <div class="mt-5 ml-5 h-9 px-2.5 flex items-center border border-[#3d3d3d] rounded-xs"><label for="amount" class="border-b border-dashed border-[#999] text-[#a0a0a0]">加仓金额倍数</label><input id="amount" type="text" class="w-0 grow text-right outline-none"></div>
                <label class="mt-4 flex items-center gap-1.5"><span class="relative w-3.5 h-3.5"><input type="checkbox" checked class="peer block appearance-none w-3.5 h-3.5 border border-[#666] checked:bg-white checked:border-white"><svg class="hidden peer-checked:block absolute inset-0 pointer-events-none" viewBox="0 0 14 14" fill="none" stroke="#333"><path d="M3 7l3 3 5-6"/></svg></span>止损触发</label>
                <div class="mt-[15px] ml-5 h-9 px-2.5 flex items-center border border-[#3d3d3d] rounded-xs"><label for="stop" class="border-b border-dashed border-[#999] text-[#a0a0a0]">限价止损</label><input id="stop" type="text" placeholder="0.1 – 99.99" class="w-0 grow text-right font-medium placeholder:text-[#a8a8a8] outline-none"><span class="ml-2">%</span></div>
                <label class="mt-4 ml-5 flex items-center gap-1.5"><input type="checkbox" class="appearance-none w-3.5 h-3.5 border border-[#666] checked:bg-white">触发止损时，终止该DCA订单</label>
                <label class="mt-4 flex items-center gap-1.5"><span class="relative w-3.5 h-3.5"><input type="checkbox" checked class="peer block appearance-none w-3.5 h-3.5 border border-[#666] checked:bg-white checked:border-white"><svg class="hidden peer-checked:block absolute inset-0 pointer-events-none" viewBox="0 0 14 14" fill="none" stroke="#333"><path d="M3 7l3 3 5-6"/></svg></span>终止时卖出所持有SXT</label>
                <div role="menu" class="absolute -right-0.5 top-[140px] w-[105px] bg-[#1f1f1f] shadow-[0_0_8px_#000] flex flex-col">
                  <button type="button" role="menuitem" class="h-9 pl-3 text-left">立即触发</button>
                  <button type="button" role="menuitem" class="h-9 pl-3 text-left">价格触发</button>
                  <button type="button" role="menuitem" class="h-9 pl-3 flex items-center gap-1.5">RSI触发<span class="w-7 h-3.5 rounded-xs bg-[#c8c8c8] text-[#444] text-[11px] leading-3.5">推荐</span></button>
                  <button type="button" role="menuitem" class="h-9 pl-3 flex items-center gap-1.5">TD触发<span class="w-7 h-3.5 rounded-xs bg-[#c8c8c8] text-[#444] text-[11px] leading-3.5">推荐</span></button>
                </div>
              </form>
            </div>

            <button aria-label="收起面板" class="absolute -top-2 left-1/2 -ml-[19px] w-[38px] h-2 rounded-t-xs bg-[#464646] flex justify-center items-center"><svg class="w-2 h-1" viewBox="0 0 8 4"><path d="M0 0h8L4 4z" fill="#c0c0c0"/></svg></button>
          </section>

          <button aria-label="展开左侧" class="absolute -left-1 top-[641px] w-2 h-[38px] rounded-xs bg-[#464646] flex items-center justify-center"><svg class="w-1 h-2" viewBox="0 0 4 8"><path d="M0 0v8l4-4z" fill="#c8c8c8"/></svg></button>
          <button aria-label="展开右侧" class="absolute -right-0.5 top-[641px] w-1.5 h-[38px] rounded-xs bg-[#464646] flex items-center justify-center"><svg class="w-1 h-1.5" viewBox="0 0 4 6"><path d="M4 0v6L0 3z" fill="#c8c8c8"/></svg></button>
        </main>

        <!-- Right tools -->
        <aside class="ml-[3px] w-11 shrink-0 bg-[#111] rounded-t-lg rounded-b-lg flex flex-col items-center pt-[17px] pb-[27px] text-xs leading-4">
          <div class="flex flex-col gap-9">
            <button aria-label="自选"><svg class="w-5 h-5" viewBox="0 0 20 20" fill="none" stroke="#b0b0b0" stroke-width="1.500"><rect x="2" y="2.500" width="4.500" height="6"/><rect x="2" y="11.500" width="4.500" height="6"/><path d="M10 3h8M10 6h8M10 9h8M10 12h8M10 15h8M10 18h8"/></svg></button>
            <button aria-label="资讯"><svg class="w-5 h-5" viewBox="0 0 20 20" fill="none" stroke="#b0b0b0" stroke-width="1.500"><rect x="3" y="2" width="14" height="16" rx="1"/><path d="M6.500 7h7M6.500 10.500h7M6.500 14h4"/></svg></button>
            <button aria-label="资金"><svg class="w-5 h-5" viewBox="0 0 20 20" fill="none" stroke="#b0b0b0" stroke-width="1.500"><path d="M4 11V1.500h14.500v17H3a2 2 0 0 1-2-2V11h3v6M13.500 7.500q-1-1.500-2.500-1.500-2 0-2 1.800 0 1.600 2.300 2 2.300.4 2.300 2.200 0 1.800-2.300 1.800-1.800 0-2.500-1.500M11.200 4.500v11"/></svg></button>
            <button aria-label="走势"><svg class="w-5 h-5" viewBox="0 0 20 20" fill="none" stroke="#b0b0b0" stroke-width="1.500"><path d="M2 9q9-1 14-6M13 2.500h4V6M4 14v5M8.500 13v6M13 12v7M17.500 9v10"/></svg></button>
            <button aria-label="看板"><svg class="w-5 h-5" viewBox="0 0 20 20" fill="none" stroke="#b0b0b0" stroke-width="1.500"><rect x="1.500" y="2.500" width="17" height="12"/><path d="M5.500 8v4M10 5.500V12M14.500 8v4M5.500 17.500h9"/></svg></button>
            <button aria-label="ETF" class="relative"><svg class="w-5 h-5" viewBox="0 0 20 20" fill="none" stroke="#b0b0b0" stroke-width="1.500"><path d="M2.500 2.500h17V13M.8 5.800h16v10.500H.8z"/></svg><span class="absolute left-0.5 top-[7px] text-[7px] leading-2 font-bold">ETF</span></button>
          </div>
          <div class="mt-[18px] w-8 border-t border-[#333]"></div>
          <button class="mt-[18px] flex flex-col items-center"><svg class="w-5 h-5" viewBox="0 0 20 20" fill="none" stroke="#b0b0b0" stroke-width="1.400"><path d="M6 2.500a8 8 0 1 0 4-1M6 8.500h8l-2-2.500M14 11.500H6l2 2.500"/></svg>下单</button>
          <button aria-label="布局" class="mt-auto"><svg class="w-5 h-5" viewBox="0 0 20 20" fill="none" stroke="#b0b0b0" stroke-width="1.500"><path d="M1.500 1.500h17v17h-17zM1.500 7h17M6 7v11.500"/></svg></button>
          <button aria-label="客服" class="mt-9"><svg class="w-5 h-5" viewBox="0 0 20 20" fill="none" stroke="#b0b0b0" stroke-width="1.700"><path d="M4.500 12V9a5.500 5.500 0 0 1 11 0v3q-1 4.500-5.500 5"/><path d="M2 9.500h2.500v5H2zM15.500 9.500H18v5h-2.500z" fill="#b0b0b0"/></svg></button>
          <button aria-label="AI助手" class="mt-[34px]"><svg class="w-6 h-6" viewBox="0 0 24 24"><path d="M1 1l5 2q6-2 12 0l5-2v7q2 6-2 10l-5 3-4 3-4-3-5-3q-4-4-2-10z" fill="#e4e6f5"/><rect x="4" y="6" width="18" height="12" rx="6" fill="#15153a" stroke="#6f6be8"/><circle cx="11" cy="13" r="2" fill="#fff"/><circle cx="18" cy="13" r="2" fill="#fff"/></svg></button>
        </aside>
      </div>
      <div class="mt-1 h-1 shrink-0 bg-[#111] rounded-tl-lg"></div>
    </div>
  </div>

  <!-- Guide annotations -->
  <svg class="absolute -top-px -left-px w-[2560px] h-[1367px] pointer-events-none" viewBox="0 0 2560 1367" fill="none">
    <g stroke="#ffff00" stroke-width="4" stroke-dasharray="12 5">
      <rect x="6" y="119" width="55" height="68"/>
      <path d="M70 186L376 765" stroke-dasharray="13 6"/>
      <rect x="391" y="796" width="86" height="37"/>
      <path d="M482 820L1302 862"/>
      <rect x="1338" y="851" width="205" height="36"/>
    </g>
    <path d="M389 789L364 767L375 767L384 756ZM1328 863L1296 852L1302 862L1295 873Z" fill="#ffff00"/>
    <g stroke="#ffff80" stroke-width="3" stroke-dasharray="9 4">
      <rect x="469" y="864" width="333" height="459"/>
      <rect x="986" y="939" width="341" height="182"/>
      <rect x="1357" y="946" width="341" height="158"/>
      <rect x="1357" y="1140" width="340" height="48"/>
      <rect x="984" y="1140" width="105" height="42"/>
      <path d="M978 1159H826"/>
    </g>
    <path d="M808 1159L831 1151L827 1159L831 1168Z" fill="#ffff80"/>
  </svg>
  <div class="absolute left-[398px] top-[730px] w-[714px] h-14 px-3.5 pb-1 rounded-[10px] bg-[#ffff00] shadow-lg flex items-center text-[30px] font-bold text-black whitespace-nowrap">路径：行情(K线底部）→现货/合约DCA→手动创建</div>
  <div class="absolute left-[982px] top-[881px] w-[284px] h-[54px] pl-3.5 pb-1 rounded-[10px] bg-[#ffff80] shadow-lg shadow-black/60 flex items-center text-[28px] font-bold text-black whitespace-nowrap">①完成基本加仓设置</div>
  <div class="absolute left-[814px] top-[1187px] w-[367px] h-[54px] pl-3.5 pb-1 rounded-[10px] bg-[#ffff80] shadow-lg shadow-black/60 flex items-center text-[28px] font-bold text-black whitespace-nowrap">②高级设置，设定止损比例</div>
  <div class="absolute left-[1706px] top-[997px] w-[230px] h-[54px] pl-3.5 pb-1 rounded-[10px] bg-[#ffff80] shadow-lg shadow-black/60 flex items-center text-[28px] font-bold text-black whitespace-nowrap">③完成下单设置</div>
  <div class="absolute left-[1703px] top-[1133px] w-[228px] h-[54px] pl-3.5 pb-1 rounded-[10px] bg-[#ffff80] shadow-lg shadow-black/60 flex items-center text-[28px] font-bold text-black whitespace-nowrap">④点击创建策略</div>
</body>
</html>
